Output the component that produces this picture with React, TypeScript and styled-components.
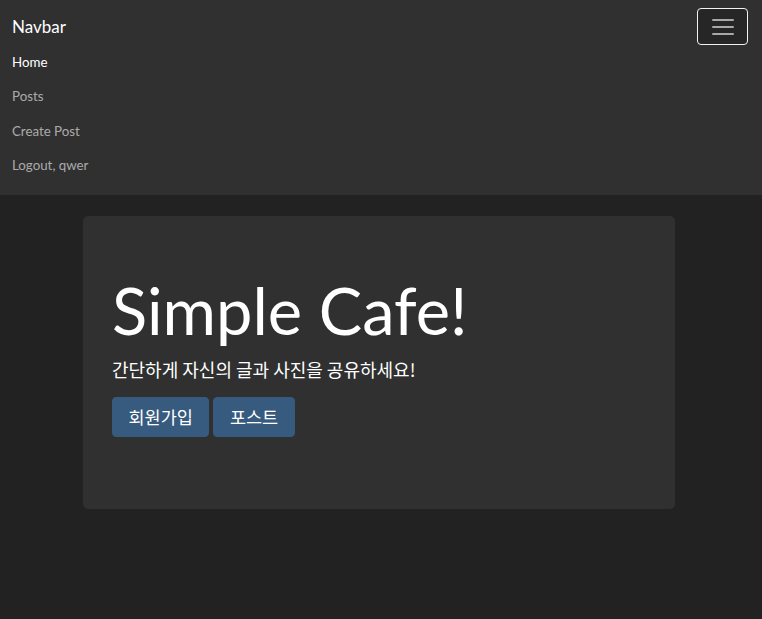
import React from 'react';
import styled, { createGlobalStyle } from 'styled-components';

const GlobalStyle = createGlobalStyle`
  html, body {
    margin: 0;
    padding: 0;
    background: #222222;
    color: #ffffff;
    font-family: Lato, "Noto Sans CJK KR", sans-serif;
    font-size: 15px;
    line-height: 1.5;
  }
  * {
    box-sizing: border-box;
  }
`;

const Page = styled.div`
  min-height: 619px;
  background: #222222;
`;

const Navbar = styled.nav`
  background: #303030;
  padding: 8px 14px 13px 12px;
`;

const NavHeader = styled.div`
  display: flex;
  align-items: center;
  justify-content: space-between;
`;

const Brand = styled.a`
  color: #ffffff;
  font-size: 17px;
  line-height: 28px;
  text-decoration: none;
`;

const Toggler = styled.button`
  width: 51px;
  height: 37px;
  display: flex;
  flex-direction: column;
  align-items: center;
  justify-content: center;
  gap: 5px;
  background: #262626;
  border: 1.5px solid #f2f2f2;
  border-radius: 4px;
  padding: 0;
`;

const TogglerLine = styled.span`
  display: block;
  width: 22px;
  height: 2px;
  background: #a8a8a8;
  border-radius: 1px;
`;

const NavList = styled.ul`
  list-style: none;
  margin: 0;
  padding: 0;
`;

const NavLink = styled.a<{ $active?: boolean }>`
  display: block;
  padding: 6px 0;
  font-size: 13.3px;
  line-height: 22.3px;
  text-decoration: none;
  color: ${({ $active }) => ($active ? '#ffffff' : 'rgba(255, 255, 255, 0.6)')};
`;

const Container = styled.main`
  width: 592px;
  margin: 21px 0 0 83px;
`;

const Jumbotron = styled.section`
  background: #303030;
  border-radius: 5px;
  padding: 55px 29px 0;
  height: 293px;
`;

const Title = styled.h1`
  margin: 0;
  font-family: Lato, sans-serif;
  font-size: 65px;
  font-weight: 400;
  line-height: 78px;
`;

const Lead = styled.p`
  margin: 7px 0 14px;
  font-size: 18px;
  line-height: 27px;
  font-family: "Noto Sans CJK KR", sans-serif;
`;

const Actions = styled.div`
  display: flex;
  gap: 4px;
`;

const Button = styled.a`
  display: inline-block;
  background: #375a7f;
  border: 1px solid #375a7f;
  border-radius: 4px;
  color: #ffffff;
  font-family: "Noto Sans CJK KR", sans-serif;
  font-size: 17.5px;
  font-weight: 400;
  line-height: 26px;
  padding: 6px 15.5px;
  text-decoration: none;
`;

const links = [
  { label: 'Home', active: true },
  { label: 'Posts' },
  { label: 'Create Post' },
  { label: 'Logout, qwer' },
];

export default function App() {
  return (
    <Page>
      <GlobalStyle />
      <Navbar>
        <NavHeader>
          <Brand href="#">Navbar</Brand>
          <Toggler aria-label="Toggle navigation">
            <TogglerLine />
            <TogglerLine />
            <TogglerLine />
          </Toggler>
        </NavHeader>
        <NavList>
          {links.map((l) => (
            <li key={l.label}>
              <NavLink href="#" $active={l.active}>
                {l.label}
              </NavLink>
            </li>
          ))}
        </NavList>
      </Navbar>
      <Container>
        <Jumbotron>
          <Title>Simple Cafe!</Title>
          <Lead>간단하게 자신의 글과 사진을 공유하세요!</Lead>
          <Actions>
            <Button href="#">회원가입</Button>
            <Button href="#">포스트</Button>
          </Actions>
        </Jumbotron>
      </Container>
    </Page>
  );
}
